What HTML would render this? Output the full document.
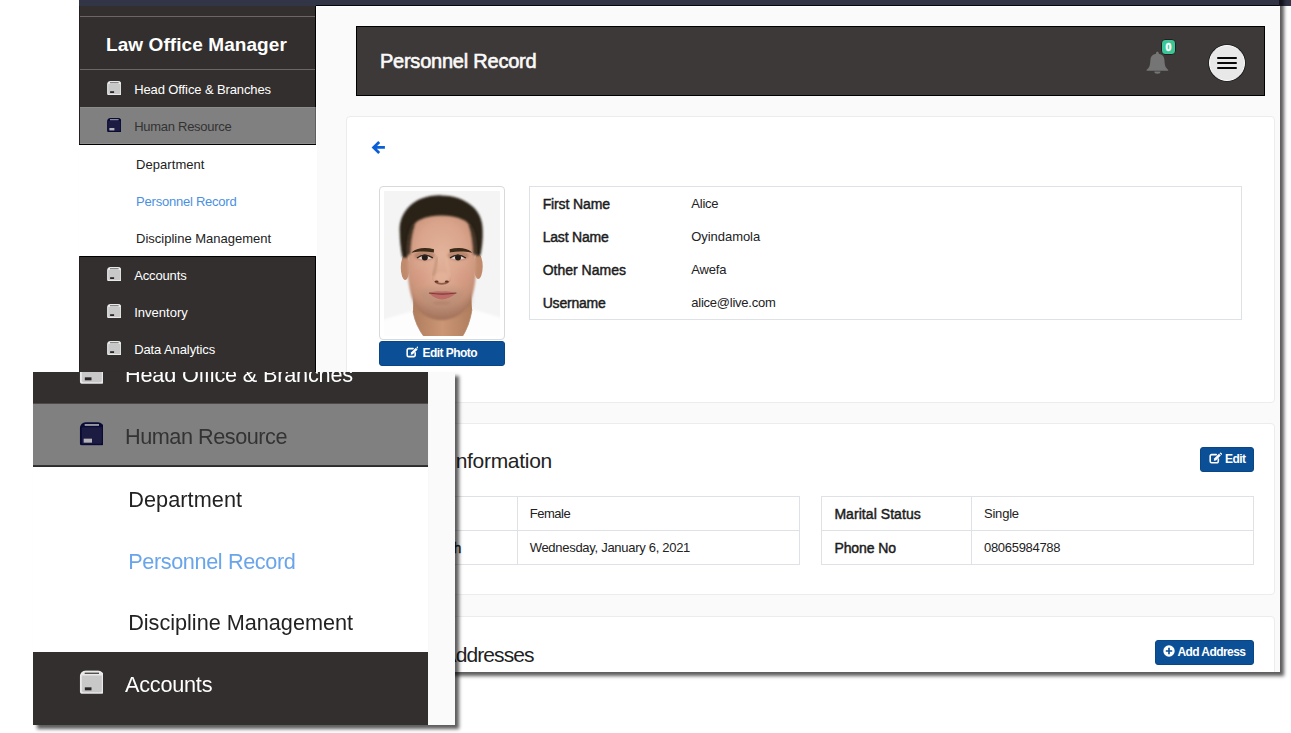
<!DOCTYPE html>
<html lang="en"><head><meta charset="utf-8"><title>Personnel Record - Law Office Manager</title>
<style>
html,body{margin:0;padding:0;background:#fff;}
body{width:1291px;height:733px;position:relative;overflow:hidden;font-family:"Liberation Sans",sans-serif;}
.a{position:absolute;box-sizing:border-box;}
.t{position:absolute;white-space:nowrap;line-height:1;}
.card{position:absolute;box-sizing:border-box;background:#fff;border:1px solid #ececec;border-radius:4px;}
.btn{position:absolute;box-sizing:border-box;background:#0b5097;border:1px solid #0a4585;border-radius:3px;}
.tb{position:absolute;box-sizing:border-box;border:1px solid #dee2e6;background:#fff;}
</style></head>
<body>
<!-- navy top band (extends to right edge) -->
<div class="a" style="left:79px;top:0;width:1212px;height:6px;background:#323546"></div>
<!-- main screenshot -->
<div class="a" id="shot" style="left:79px;top:-10px;width:1201px;height:682px;overflow:hidden;box-shadow:4px 4px 3.5px rgba(0,0,0,.64)">
<div class="a" style="left:-79px;top:10px;width:1291px;height:733px">
<div class="a" style="left:79px;top:0;width:1212px;height:6px;background:#323546"></div>
<div class="a" style="left:316px;top:6px;width:964px;height:700px;background:#fafafa;border-left:1px solid #fff;border-top:1px solid #fff"></div>
<div class="a" style="left:316px;top:5px;width:964px;height:1px;background:#05050c"></div>
<div class="a" style="left:79px;top:5.7px;width:237px;height:700px;background:#332f2e"></div>
<div class="a" style="left:79px;top:16px;width:237px;height:1px;background:#6d6665"></div>
<div class="a" style="left:79px;top:69px;width:237px;height:1px;background:#6d6665"></div>
<span class="t" style="left:106px;top:34.62px;font-size:19px;font-weight:bold;color:#fff;letter-spacing:0.08px;">Law Office Manager</span>
<svg class="a" style="left:106.7px;top:80.60px" width="14.6" height="14.4" viewBox="0 0 14.6 14.4"><path d="M3.6 0.1 H11 A3.5 3.5 0 0 1 14.5 3.6 V12.6 A1.7 1.7 0 0 1 12.8 14.3 H1.8 A1.7 1.7 0 0 1 0.1 12.6 V3.6 A3.5 3.5 0 0 1 3.6 0.1 Z" fill="#e9e9e9"/><path d="M1.3 3.1 H13.3 V12.3 A0.8 0.8 0 0 1 12.5 13.1 H2.1 A0.8 0.8 0 0 1 1.3 12.3 Z" fill="#c8c8c8"/><rect x="3" y="1.35" width="8.6" height="0.85" fill="#3a3635" opacity="0.85"/><rect x="3.1" y="10.2" width="4" height="1.8" fill="#2a2625"/></svg>
<span class="t" style="left:134.2px;top:82.80px;font-size:13px;font-weight:normal;color:#fff;letter-spacing:-0.11px;">Head Office &amp; Branches</span>
<div class="a" style="left:79px;top:107px;width:237px;height:37px;background:#808080;border-top:1px solid #8c8c8c;border-bottom:1px solid #8e8e8e"></div>
<div class="a" style="left:79px;top:144px;width:237px;height:1px;background:#000"></div>
<svg class="a" style="left:106.7px;top:117.80px" width="14.6" height="14.4" viewBox="0 0 14.6 14.4"><path d="M3.6 0.1 H11 A3.5 3.5 0 0 1 14.5 3.6 V12.6 A1.7 1.7 0 0 1 12.8 14.3 H1.8 A1.7 1.7 0 0 1 0.1 12.6 V3.6 A3.5 3.5 0 0 1 3.6 0.1 Z" fill="#0a0a36"/><path d="M1.3 3.1 H13.3 V12.3 A0.8 0.8 0 0 1 12.5 13.1 H2.1 A0.8 0.8 0 0 1 1.3 12.3 Z" fill="#1c1c42"/><rect x="3" y="1.35" width="8.6" height="0.85" fill="#c8c8c8" opacity="1"/><rect x="2.4" y="10" width="5" height="2.4" fill="#b4b4b8"/></svg>
<span class="t" style="left:134.2px;top:119.60px;font-size:13px;font-weight:normal;color:#333;letter-spacing:-0.28px;">Human Resource</span>
<div class="a" style="left:79px;top:145px;width:237px;height:111px;background:#fff"></div>
<span class="t" style="left:136.1px;top:158.20px;font-size:13px;font-weight:normal;color:#222;letter-spacing:0.05px;">Department</span>
<span class="t" style="left:136.1px;top:195.20px;font-size:13px;font-weight:normal;color:#4a90e2;letter-spacing:-0.23px;">Personnel Record</span>
<span class="t" style="left:136.1px;top:232.20px;font-size:13px;font-weight:normal;color:#222;letter-spacing:-0.01px;">Discipline Management</span>
<div class="a" style="left:79px;top:256px;width:237px;height:1px;background:#000"></div>
<div class="a" style="left:315px;top:6px;width:1px;height:101px;background:#000"></div>
<div class="a" style="left:315px;top:107px;width:1px;height:37px;background:#5e5e5e"></div>
<div class="a" style="left:315px;top:256px;width:1px;height:450px;background:#000"></div>
<div class="a" style="left:79px;top:6px;width:1px;height:138px;background:#242120"></div>
<div class="a" style="left:79px;top:256px;width:1px;height:450px;background:#242120"></div>
<svg class="a" style="left:106.7px;top:267.00px" width="14.6" height="14.4" viewBox="0 0 14.6 14.4"><path d="M3.6 0.1 H11 A3.5 3.5 0 0 1 14.5 3.6 V12.6 A1.7 1.7 0 0 1 12.8 14.3 H1.8 A1.7 1.7 0 0 1 0.1 12.6 V3.6 A3.5 3.5 0 0 1 3.6 0.1 Z" fill="#e9e9e9"/><path d="M1.3 3.1 H13.3 V12.3 A0.8 0.8 0 0 1 12.5 13.1 H2.1 A0.8 0.8 0 0 1 1.3 12.3 Z" fill="#c8c8c8"/><rect x="3" y="1.35" width="8.6" height="0.85" fill="#3a3635" opacity="0.85"/><rect x="3.1" y="10.2" width="4" height="1.8" fill="#2a2625"/></svg>
<span class="t" style="left:134.2px;top:269.20px;font-size:13px;font-weight:normal;color:#fff;letter-spacing:-0.14px;">Accounts</span>
<svg class="a" style="left:106.7px;top:304.00px" width="14.6" height="14.4" viewBox="0 0 14.6 14.4"><path d="M3.6 0.1 H11 A3.5 3.5 0 0 1 14.5 3.6 V12.6 A1.7 1.7 0 0 1 12.8 14.3 H1.8 A1.7 1.7 0 0 1 0.1 12.6 V3.6 A3.5 3.5 0 0 1 3.6 0.1 Z" fill="#e9e9e9"/><path d="M1.3 3.1 H13.3 V12.3 A0.8 0.8 0 0 1 12.5 13.1 H2.1 A0.8 0.8 0 0 1 1.3 12.3 Z" fill="#c8c8c8"/><rect x="3" y="1.35" width="8.6" height="0.85" fill="#3a3635" opacity="0.85"/><rect x="3.1" y="10.2" width="4" height="1.8" fill="#2a2625"/></svg>
<span class="t" style="left:134.2px;top:306.20px;font-size:13px;font-weight:normal;color:#fff;letter-spacing:0.02px;">Inventory</span>
<svg class="a" style="left:106.7px;top:341.00px" width="14.6" height="14.4" viewBox="0 0 14.6 14.4"><path d="M3.6 0.1 H11 A3.5 3.5 0 0 1 14.5 3.6 V12.6 A1.7 1.7 0 0 1 12.8 14.3 H1.8 A1.7 1.7 0 0 1 0.1 12.6 V3.6 A3.5 3.5 0 0 1 3.6 0.1 Z" fill="#e9e9e9"/><path d="M1.3 3.1 H13.3 V12.3 A0.8 0.8 0 0 1 12.5 13.1 H2.1 A0.8 0.8 0 0 1 1.3 12.3 Z" fill="#c8c8c8"/><rect x="3" y="1.35" width="8.6" height="0.85" fill="#3a3635" opacity="0.85"/><rect x="3.1" y="10.2" width="4" height="1.8" fill="#2a2625"/></svg>
<span class="t" style="left:134.2px;top:343.20px;font-size:13px;font-weight:normal;color:#fff;letter-spacing:-0.1px;">Data Analytics</span>
<div class="a" style="left:356px;top:26px;width:909px;height:70px;background:#3d3938;border:1px solid #000"></div>
<span class="t" style="left:379.9px;top:50.97px;font-size:20px;font-weight:normal;color:#fafafa;letter-spacing:-0.22px;-webkit-text-stroke:0.6px currentColor;">Personnel Record</span>
<svg class="a" style="left:1146px;top:51px" width="23" height="23" viewBox="0 0 23 23">
<path d="M11.4 0.8 c0.8 0 1.4 0.6 1.4 1.4 v0.6 c3.6 0.6 5.4 2.6 5.6 6 c0.2 3.9 0.6 6 1.4 7.5 c0.6 1.1 1.4 1.7 2.2 2.4 c0.5 0.4 0.3 1 -0.4 1 H1.2 c-0.7 0 -0.9 -0.6 -0.4 -1 c0.8 -0.7 1.6 -1.3 2.2 -2.4 c0.8 -1.5 1.2 -3.6 1.4 -7.5 c0.2 -3.4 2 -5.4 5.6 -6 v-0.6 c0 -0.8 0.6 -1.4 1.4 -1.4z" fill="#757575"/>
<path d="M8.3 20.5 h6.2 a3.1 2.2 0 0 1 -6.2 0z" fill="#757575"/></svg>
<div class="a" style="left:1161px;top:39.4px;width:15px;height:15.2px;background:#3cc695;border:1px solid #2a1a22;border-radius:4px"></div>
<span class="t" style="left:1165.4px;top:42.41px;font-size:10.5px;font-weight:bold;color:#fff;letter-spacing:0px;-webkit-text-stroke:0.5px #fff;">0</span>
<div class="a" style="left:1208.7px;top:44.5px;width:36.6px;height:36.6px;border-radius:50%;background:#e8e8e8;border:1.8px solid #fff;box-shadow:0 0 0 0.8px #1c1c1c"></div>
<div class="a" style="left:1216.8px;top:56.65px;width:20.4px;height:2.3px;background:#080808;border-radius:1px"></div>
<div class="a" style="left:1216.8px;top:61.8px;width:20.4px;height:2.3px;background:#080808;border-radius:1px"></div>
<div class="a" style="left:1216.8px;top:66.9px;width:20.4px;height:2.3px;background:#080808;border-radius:1px"></div>
<div class="card" style="left:346px;top:116px;width:929px;height:287px"></div>
<svg class="a" style="left:371px;top:140px" width="15" height="15" viewBox="0 0 15 15"><path d="M13.9 7.4 H3.4 M8.2 1.9 L2.6 7.4 L8.2 12.9" fill="none" stroke="#0b5fd6" stroke-width="2.8" stroke-linejoin="miter"/></svg>
<div class="a" style="left:379px;top:186px;width:126px;height:154px;background:#fff;border:1px solid #d9d9d9;border-radius:4px"></div>
<svg class="a" style="left:384px;top:191px" width="116" height="145" viewBox="0 0 116 145">
<defs>
<filter id="b1" x="-20%" y="-20%" width="140%" height="140%"><feGaussianBlur stdDeviation="1.1"/></filter>
<filter id="b2" x="-30%" y="-30%" width="160%" height="160%"><feGaussianBlur stdDeviation="2.4"/></filter>
<filter id="b05" x="-20%" y="-20%" width="140%" height="140%"><feGaussianBlur stdDeviation="0.55"/></filter>
<filter id="b08" x="-20%" y="-20%" width="140%" height="140%"><feGaussianBlur stdDeviation="0.8"/></filter>
<radialGradient id="skin" gradientUnits="userSpaceOnUse" cx="57.5" cy="58" r="50" gradientTransform="matrix(1 0 0 1.3 0 -12)"><stop offset="0" stop-color="#e3b39b"/><stop offset="0.5" stop-color="#d9a48b"/><stop offset="0.8" stop-color="#c69177"/><stop offset="1" stop-color="#a1715a"/></radialGradient>
<linearGradient id="neck" x1="0" y1="0" x2="1" y2="0"><stop offset="0" stop-color="#b07d5e"/><stop offset="0.5" stop-color="#ca9675"/><stop offset="1" stop-color="#b07d5e"/></linearGradient>
<clipPath id="cp"><rect x="0" y="0" width="116" height="145"/></clipPath>
</defs>
<rect width="116" height="145" fill="#f4f4f4"/>
<g clip-path="url(#cp)">
<!-- shirt -->
<path d="M-6 150 L-6 130.5 Q10 125 29 120 L88 118 Q104 122.5 122 128.5 L122 150 Z" fill="#fdfdfd" filter="url(#b1)"/>
<!-- neck -->
<path d="M29.5 100 L29 120.5 Q31.5 135 41 147 L77.5 147 Q85.5 135 88 118.5 L87 100 Z" fill="url(#neck)" filter="url(#b05)"/>
<path d="M30.5 112 Q57.5 137 86.5 112 L86 102 L31 102 Z" fill="#8e6047" opacity="0.45" filter="url(#b2)"/>
<!-- ears -->
<ellipse cx="21.2" cy="76.5" rx="4.4" ry="12.4" fill="#c08b6d" filter="url(#b05)"/>
<ellipse cx="94.3" cy="75.5" rx="4.4" ry="12.4" fill="#c08b6d" filter="url(#b05)"/>
<!-- hair (single mass) -->
<path d="M57.4 4.4 C44 4 32.5 8 25.2 15.6 C18 23 15.2 31.5 15.6 40 C15.8 49 16.6 58 18.4 66.5 L26 66.5 L27 50 L88.5 50 L89.6 64.5 L96.4 64.5 C98.2 56 99 48 98.7 40 C98.8 31 96 22.5 89.2 16 C81.5 8.6 70.5 4.6 57.4 4.4 Z" fill="#2a2018" filter="url(#b08)"/>
<!-- face -->
<path d="M23.6 64 C23.4 55 24.4 46 26.7 39.6 C28.8 34 31.6 31 36 28.8 C42 26 50 24.6 57.4 24.6 C65 24.6 73 26 79 28.8 C83.6 31 86.4 34 88.9 39.6 C91.2 46 92 55 91.9 64 C92.4 74 92.2 83 91 92 C89.6 101 88 106.5 85.5 111.5 C82.5 117.5 79 121 74.5 124 C69 127.6 63 129 57.5 129 C52 129 46 127.6 40.5 124 C36 121 32.5 117.5 30 111.5 C27.5 106.5 26 101 24.6 92 C23.4 83 23.2 74 23.6 64 Z" fill="url(#skin)" filter="url(#b08)"/>
<!-- temple hair fade -->
<path d="M22.4 64 C22.2 52 23.2 43 26.4 35 L31 33 C27.6 44 26.6 54 26.4 63 Z" fill="#2a2018" opacity="0.8" filter="url(#b1)"/>
<path d="M93.1 64 C93.3 52 92.3 43 89.1 35 L84.5 33 C87.9 44 88.9 54 89.1 63 Z" fill="#2a2018" opacity="0.8" filter="url(#b1)"/>
<!-- eye sockets shadow -->
<ellipse cx="40.6" cy="64.6" rx="10.5" ry="4.8" fill="#976650" opacity="0.5" filter="url(#b1)"/>
<ellipse cx="74.2" cy="64.6" rx="10.5" ry="4.8" fill="#976650" opacity="0.5" filter="url(#b1)"/>
<!-- brows -->
<path d="M27.4 61.8 Q30 58.2 37 57.2 Q44 56.6 50 58.2 L49.8 61.4 Q42 60.2 36 60.6 Q31 61 27.4 61.8 Z" fill="#3a2919" filter="url(#b05)"/>
<path d="M88.2 61.8 Q85.6 58.2 78.6 57.2 Q71.6 56.6 65.6 58.2 L65.8 61.4 Q73.6 60.2 79.6 60.6 Q84.6 61 88.2 61.8 Z" fill="#3a2919" filter="url(#b05)"/>
<!-- eyes -->
<path d="M33.4 67 Q40.6 62.2 48.4 67 Q40.6 70.4 33.4 67 Z" fill="#e2d4cc"/>
<path d="M66.4 67 Q74.2 62.2 81.4 67 Q74.2 70.4 66.4 67 Z" fill="#e2d4cc"/>
<circle cx="40.8" cy="66.6" r="3" fill="#221b18"/>
<circle cx="74" cy="66.4" r="3" fill="#221b18"/>
<path d="M33 67 Q40.6 61.4 48.8 66.8" stroke="#33231b" stroke-width="1.4" fill="none" filter="url(#b05)"/>
<path d="M66 66.8 Q74.2 61.4 81.8 67" stroke="#33231b" stroke-width="1.4" fill="none" filter="url(#b05)"/>
<ellipse cx="36" cy="86" rx="8" ry="9" fill="#d9927f" opacity="0.28" filter="url(#b2)"/><ellipse cx="79" cy="86" rx="8" ry="9" fill="#d9927f" opacity="0.28" filter="url(#b2)"/>
<!-- stubble -->
<path d="M36 100 Q57.6 92 79 100 Q80 116 57.6 124 Q35 116 36 100 Z" fill="#8c7a6c" opacity="0.16" filter="url(#b2)"/>
<!-- nose -->
<path d="M53 66 Q51.4 78 49.4 85" stroke="#a27256" stroke-width="2.2" fill="none" opacity="0.45" filter="url(#b1)"/>
<path d="M62 66 Q63.6 78 65.6 85" stroke="#e9bfa2" stroke-width="2" fill="none" opacity="0.45" filter="url(#b1)"/>
<ellipse cx="57.8" cy="86" rx="7" ry="5" fill="#e6b49c" opacity="0.7" filter="url(#b1)"/><path d="M48.2 86 Q48.6 91 53.6 91 Q57.6 93 61.8 91 Q66.8 91 67.4 86 Q66.4 93.4 57.6 93.8 Q49.4 93.4 48.2 86 Z" fill="#8a5440" opacity="0.9" filter="url(#b05)"/><ellipse cx="52.6" cy="90.6" rx="1.9" ry="1" fill="#5a3226" filter="url(#b05)"/><ellipse cx="62.8" cy="90.6" rx="1.9" ry="1" fill="#5a3226" filter="url(#b05)"/>
<!-- mouth -->
<path d="M45 102 Q51.6 99.2 57.6 100.6 Q63.6 99.2 72.4 102 Q65 108.4 57.8 108.4 Q51 108.4 45 102 Z" fill="#bd6c68" filter="url(#b05)"/>
<path d="M45 102 Q57.6 104.2 72.4 102" stroke="#7a3a36" stroke-width="1.2" fill="none" filter="url(#b05)"/>
<!-- under-lip shading -->
<ellipse cx="57.6" cy="112" rx="9" ry="2" fill="#a5755a" opacity="0.35" filter="url(#b1)"/>
<!-- collar line -->
<path d="M29 120.5 Q31.5 135 41 147" stroke="#b4896a" stroke-width="0.9" fill="none" opacity="0.9"/>
<path d="M88 118.5 Q85.5 135 77.5 147" stroke="#b4896a" stroke-width="0.9" fill="none" opacity="0.9"/>
</g>
</svg>
<div class="btn" style="left:379px;top:341px;width:126px;height:25px"></div>
<svg class="a" style="left:405.9px;top:346.2px" width="12.6" height="12.6" viewBox="0 0 14 14"><path d="M10.2 7.6v2.6a1.6 1.6 0 0 1-1.6 1.6H2.9a1.6 1.6 0 0 1-1.6-1.6V4.5a1.6 1.6 0 0 1 1.6-1.6h5" fill="none" stroke="#fff" stroke-width="1.75" stroke-linecap="round"/><path d="M5.6 7.2 L10.9 1.9 L12.9 3.9 L7.6 9.2 L5.3 9.6 Z" fill="#fff"/><path d="M11.5 1.3 l0.6-0.6 a0.7 0.7 0 0 1 1 0 l1 1 a0.7 0.7 0 0 1 0 1 l-0.6 0.6z" fill="#fff"/></svg>
<span class="t" style="left:422.5px;top:347.14px;font-size:12px;font-weight:bold;color:#fff;letter-spacing:-0.55px;">Edit Photo</span>
<div class="tb" style="left:529px;top:186px;width:713px;height:134px"></div>
<span class="t" style="left:542.7px;top:197.35px;font-size:14px;font-weight:normal;color:#1c1c1c;letter-spacing:-0.13px;-webkit-text-stroke:0.45px currentColor;">First Name</span>
<span class="t" style="left:691.3px;top:197.40px;font-size:13px;font-weight:normal;color:#222;letter-spacing:-0.24px;">Alice</span>
<span class="t" style="left:542.7px;top:230.35px;font-size:14px;font-weight:normal;color:#1c1c1c;letter-spacing:-0.2px;-webkit-text-stroke:0.45px currentColor;">Last Name</span>
<span class="t" style="left:691.3px;top:230.40px;font-size:13px;font-weight:normal;color:#222;letter-spacing:-0.06px;">Oyindamola</span>
<span class="t" style="left:542.7px;top:263.35px;font-size:14px;font-weight:normal;color:#1c1c1c;letter-spacing:0.0px;-webkit-text-stroke:0.45px currentColor;">Other Names</span>
<span class="t" style="left:691.3px;top:263.40px;font-size:13px;font-weight:normal;color:#222;letter-spacing:-0.2px;">Awefa</span>
<span class="t" style="left:542.7px;top:296.35px;font-size:14px;font-weight:normal;color:#1c1c1c;letter-spacing:-0.2px;-webkit-text-stroke:0.45px currentColor;">Username</span>
<span class="t" style="left:691.3px;top:296.40px;font-size:13px;font-weight:normal;color:#222;letter-spacing:-0.24px;">alice@live.com</span>
<div class="card" style="left:346px;top:423px;width:929px;height:172.4px"></div>
<span class="t" style="right:739.10px;top:449.92px;font-size:21px;font-weight:normal;color:#222;letter-spacing:-0.3px;">Personal Information</span>
<div class="btn" style="left:1200px;top:447px;width:54px;height:25px"></div>
<svg class="a" style="left:1208.8px;top:452.3px" width="12.8" height="12.8" viewBox="0 0 14 14"><path d="M10.2 7.6v2.6a1.6 1.6 0 0 1-1.6 1.6H2.9a1.6 1.6 0 0 1-1.6-1.6V4.5a1.6 1.6 0 0 1 1.6-1.6h5" fill="none" stroke="#fff" stroke-width="1.75" stroke-linecap="round"/><path d="M5.6 7.2 L10.9 1.9 L12.9 3.9 L7.6 9.2 L5.3 9.6 Z" fill="#fff"/><path d="M11.5 1.3 l0.6-0.6 a0.7 0.7 0 0 1 1 0 l1 1 a0.7 0.7 0 0 1 0 1 l-0.6 0.6z" fill="#fff"/></svg>
<span class="t" style="left:1225px;top:452.54px;font-size:12px;font-weight:bold;color:#fff;letter-spacing:-0.55px;">Edit</span>
<div class="tb" style="left:367px;top:496px;width:433px;height:69px"></div>
<div class="a" style="left:367px;top:530px;width:433px;height:1px;background:#dee2e6"></div>
<div class="a" style="left:517px;top:496px;width:1px;height:69px;background:#dee2e6"></div>
<span class="t" style="left:380px;top:506.75px;font-size:14px;font-weight:normal;color:#1c1c1c;letter-spacing:-0.1px;-webkit-text-stroke:0.45px currentColor;">Gender</span>
<span class="t" style="right:829.75px;top:540.85px;font-size:14px;font-weight:normal;color:#1c1c1c;letter-spacing:-0.05px;-webkit-text-stroke:0.45px currentColor;">Date of Birth</span>
<span class="t" style="left:529.7px;top:506.90px;font-size:13px;font-weight:normal;color:#222;letter-spacing:-0.48px;">Female</span>
<span class="t" style="left:529.7px;top:541.30px;font-size:13px;font-weight:normal;color:#222;letter-spacing:-0.29px;">Wednesday, January 6, 2021</span>
<div class="tb" style="left:821px;top:496px;width:433px;height:69px"></div>
<div class="a" style="left:821px;top:530px;width:433px;height:1px;background:#dee2e6"></div>
<div class="a" style="left:971px;top:496px;width:1px;height:69px;background:#dee2e6"></div>
<span class="t" style="left:834.4px;top:506.75px;font-size:14px;font-weight:normal;color:#1c1c1c;letter-spacing:0.06px;-webkit-text-stroke:0.45px currentColor;">Marital Status</span>
<span class="t" style="left:834.4px;top:540.85px;font-size:14px;font-weight:normal;color:#1c1c1c;letter-spacing:-0.08px;-webkit-text-stroke:0.45px currentColor;">Phone No</span>
<span class="t" style="left:984px;top:506.90px;font-size:13px;font-weight:normal;color:#222;letter-spacing:-0.22px;">Single</span>
<span class="t" style="left:984px;top:541.30px;font-size:13px;font-weight:normal;color:#222;letter-spacing:-0.3px;">08065984788</span>
<div class="card" style="left:346px;top:616px;width:929px;height:120px"></div>
<span class="t" style="right:757.30px;top:643.72px;font-size:21px;font-weight:normal;color:#222;letter-spacing:-0.9px;">Contact Addresses</span>
<div class="btn" style="left:1155px;top:640px;width:99px;height:25px"></div>
<svg class="a" style="left:1163px;top:645.4px" width="12" height="12" viewBox="0 0 12 12"><circle cx="6" cy="6" r="5.7" fill="#fff"/><path d="M6 2.8v6.4M2.8 6h6.4" stroke="#0b5097" stroke-width="1.7"/></svg>
<span class="t" style="left:1177.4px;top:645.54px;font-size:12px;font-weight:bold;color:#fff;letter-spacing:-0.57px;">Add Address</span>
</div>
</div>
<div class="a" style="left:1279px;top:0;width:1px;height:6px;background:#14141e"></div>
<!-- zoomed inset -->
<div class="a" id="inset" style="left:33px;top:372px;width:422px;height:352.6px;overflow:hidden;background:#fafafa;box-shadow:4px 4px 3.5px rgba(0,0,0,.64)">
<div class="a" style="left:0;top:0;width:1291px;height:733px;transform-origin:0 0;transform:scale(1.6667) translate(-79px,-88px);filter:blur(0.3px);">
<div class="a" style="left:316px;top:6px;width:964px;height:700px;background:#fafafa"></div>
<div class="a" style="left:79px;top:5.7px;width:237px;height:700px;background:#332f2e"></div>
<div class="a" style="left:79px;top:16px;width:237px;height:1px;background:#6d6665"></div>
<div class="a" style="left:79px;top:69px;width:237px;height:1px;background:#6d6665"></div>
<span class="t" style="left:106px;top:34.62px;font-size:19px;font-weight:bold;color:#fff;letter-spacing:0.08px;">Law Office Manager</span>
<svg class="a" style="left:106.7px;top:80.60px" width="14.6" height="14.4" viewBox="0 0 14.6 14.4"><path d="M3.6 0.1 H11 A3.5 3.5 0 0 1 14.5 3.6 V12.6 A1.7 1.7 0 0 1 12.8 14.3 H1.8 A1.7 1.7 0 0 1 0.1 12.6 V3.6 A3.5 3.5 0 0 1 3.6 0.1 Z" fill="#e9e9e9"/><path d="M1.3 3.1 H13.3 V12.3 A0.8 0.8 0 0 1 12.5 13.1 H2.1 A0.8 0.8 0 0 1 1.3 12.3 Z" fill="#c8c8c8"/><rect x="3" y="1.35" width="8.6" height="0.85" fill="#3a3635" opacity="0.85"/><rect x="3.1" y="10.2" width="4" height="1.8" fill="#2a2625"/></svg>
<span class="t" style="left:134.2px;top:82.80px;font-size:13px;font-weight:normal;color:#fff;letter-spacing:-0.11px;">Head Office &amp; Branches</span>
<div class="a" style="left:79px;top:106.6px;width:237px;height:37px;background:#808080"></div>
<div class="a" style="left:79px;top:143.5px;width:237px;height:1.1px;background:#2b2b2b"></div>
<svg class="a" style="left:106.7px;top:117.80px" width="14.6" height="14.4" viewBox="0 0 14.6 14.4"><path d="M3.6 0.1 H11 A3.5 3.5 0 0 1 14.5 3.6 V12.6 A1.7 1.7 0 0 1 12.8 14.3 H1.8 A1.7 1.7 0 0 1 0.1 12.6 V3.6 A3.5 3.5 0 0 1 3.6 0.1 Z" fill="#0a0a36"/><path d="M1.3 3.1 H13.3 V12.3 A0.8 0.8 0 0 1 12.5 13.1 H2.1 A0.8 0.8 0 0 1 1.3 12.3 Z" fill="#1c1c42"/><rect x="3" y="1.35" width="8.6" height="0.85" fill="#c8c8c8" opacity="1"/><rect x="2.4" y="10" width="5" height="2.4" fill="#b4b4b8"/></svg>
<span class="t" style="left:134.2px;top:119.60px;font-size:13px;font-weight:normal;color:#333;letter-spacing:-0.28px;">Human Resource</span>
<div class="a" style="left:79px;top:145px;width:237px;height:111px;background:#fff"></div>
<span class="t" style="left:136.1px;top:158.20px;font-size:13px;font-weight:normal;color:#222;letter-spacing:0.05px;">Department</span>
<span class="t" style="left:136.1px;top:195.20px;font-size:13px;font-weight:normal;color:#6aa5ea;letter-spacing:-0.23px;">Personnel Record</span>
<span class="t" style="left:136.1px;top:232.20px;font-size:13px;font-weight:normal;color:#222;letter-spacing:-0.01px;">Discipline Management</span>
<svg class="a" style="left:106.7px;top:267.00px" width="14.6" height="14.4" viewBox="0 0 14.6 14.4"><path d="M3.6 0.1 H11 A3.5 3.5 0 0 1 14.5 3.6 V12.6 A1.7 1.7 0 0 1 12.8 14.3 H1.8 A1.7 1.7 0 0 1 0.1 12.6 V3.6 A3.5 3.5 0 0 1 3.6 0.1 Z" fill="#e9e9e9"/><path d="M1.3 3.1 H13.3 V12.3 A0.8 0.8 0 0 1 12.5 13.1 H2.1 A0.8 0.8 0 0 1 1.3 12.3 Z" fill="#c8c8c8"/><rect x="3" y="1.35" width="8.6" height="0.85" fill="#3a3635" opacity="0.85"/><rect x="3.1" y="10.2" width="4" height="1.8" fill="#2a2625"/></svg>
<span class="t" style="left:134.2px;top:269.20px;font-size:13px;font-weight:normal;color:#fff;letter-spacing:-0.14px;">Accounts</span>
<svg class="a" style="left:106.7px;top:304.00px" width="14.6" height="14.4" viewBox="0 0 14.6 14.4"><path d="M3.6 0.1 H11 A3.5 3.5 0 0 1 14.5 3.6 V12.6 A1.7 1.7 0 0 1 12.8 14.3 H1.8 A1.7 1.7 0 0 1 0.1 12.6 V3.6 A3.5 3.5 0 0 1 3.6 0.1 Z" fill="#e9e9e9"/><path d="M1.3 3.1 H13.3 V12.3 A0.8 0.8 0 0 1 12.5 13.1 H2.1 A0.8 0.8 0 0 1 1.3 12.3 Z" fill="#c8c8c8"/><rect x="3" y="1.35" width="8.6" height="0.85" fill="#3a3635" opacity="0.85"/><rect x="3.1" y="10.2" width="4" height="1.8" fill="#2a2625"/></svg>
<span class="t" style="left:134.2px;top:306.20px;font-size:13px;font-weight:normal;color:#fff;letter-spacing:0.02px;">Inventory</span>
<svg class="a" style="left:106.7px;top:341.00px" width="14.6" height="14.4" viewBox="0 0 14.6 14.4"><path d="M3.6 0.1 H11 A3.5 3.5 0 0 1 14.5 3.6 V12.6 A1.7 1.7 0 0 1 12.8 14.3 H1.8 A1.7 1.7 0 0 1 0.1 12.6 V3.6 A3.5 3.5 0 0 1 3.6 0.1 Z" fill="#e9e9e9"/><path d="M1.3 3.1 H13.3 V12.3 A0.8 0.8 0 0 1 12.5 13.1 H2.1 A0.8 0.8 0 0 1 1.3 12.3 Z" fill="#c8c8c8"/><rect x="3" y="1.35" width="8.6" height="0.85" fill="#3a3635" opacity="0.85"/><rect x="3.1" y="10.2" width="4" height="1.8" fill="#2a2625"/></svg>
<span class="t" style="left:134.2px;top:343.20px;font-size:13px;font-weight:normal;color:#fff;letter-spacing:-0.1px;">Data Analytics</span>
</div>
</div>
</body></html>
